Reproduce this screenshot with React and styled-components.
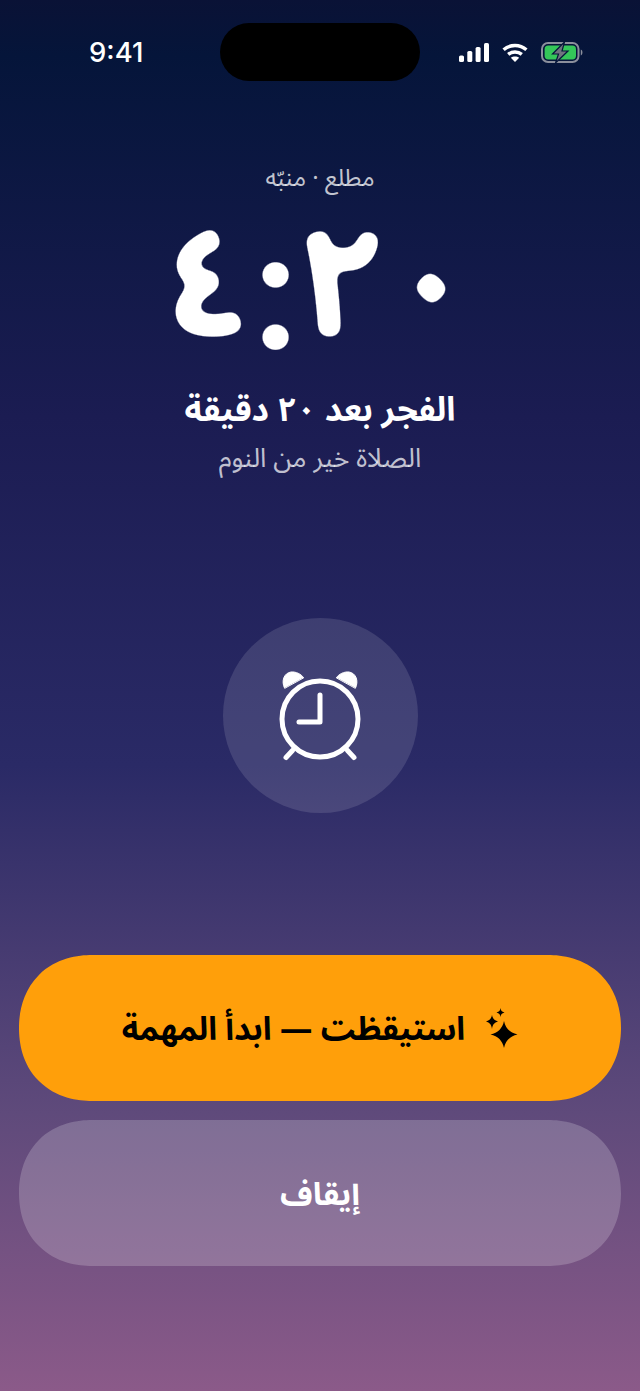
import React from 'react';
import styled, { createGlobalStyle } from 'styled-components';

const Global = createGlobalStyle`
  html, body { margin: 0; padding: 0; }
  body { font-family: "Noto Sans Arabic", "DejaVu Sans", "Noto Sans", sans-serif; }
`;
const Screen = styled.div`
  width: 640px; height: 1391px; box-sizing: border-box; overflow: hidden;
  display: flex; flex-direction: column; align-items: center;
  background: linear-gradient(180deg, #0a1236 0%, #05153a 4%, #1b1c52 30%, #2a2a66 55%, #5f4a7b 80%, #8b5a89 100%);
  color: #fff;
`;
const StatusBar = styled.div`
  width: 100%; height: 81px; box-sizing: border-box; padding-top: 23px;
  display: grid; grid-template-columns: 1fr 200px 1fr; align-items: start; direction: ltr;
`;
const Time = styled.div`
  font: 500 27.5px/58px Inter, sans-serif; padding-left: 89px; color: #fff;
`;
const Island = styled.div`
  height: 58px; border-radius: 29px; background: #000;
`;
const Indicators = styled.div`
  display: flex; align-items: center; justify-content: flex-end; gap: 13px; height: 58px; padding-right: 57px;
`;
const Eyebrow = styled.div`
  margin-top: 83px; font-size: 24px; line-height: 30px; color: rgba(255,255,255,.76);
`;
const Clock = styled.div`
  direction: ltr; font-size: 155px; line-height: 170px; font-weight: 700; margin-top: 7px; letter-spacing: 1px;
  filter: url(#round-digits);
`;
const ClockColon = styled.span`
  vertical-align: -13px; line-height: 0;
`;
const FilterDefs = styled.svg`
  position: absolute; width: 0; height: 0;
`;
const Headline = styled.div`
  font-size: 33.5px; line-height: 44px; font-weight: 700; margin-top: 18px;
`;
const Sub = styled.div`
  font-size: 26.5px; line-height: 36px; color: rgba(255,255,255,.74); margin-top: 8px;
`;
const AlarmBadge = styled.div`
  width: 195px; height: 195px; border-radius: 50%; margin-top: 141px;
  background: rgba(255,255,255,.12);
  display: flex; align-items: center; justify-content: center;
`;
const Actions = styled.div`
  width: 602px; margin-top: 142px; display: flex; flex-direction: column; gap: 19px;
`;
const Pill = styled.button`
  height: 146px; border: 0; border-radius: 73px; corner-shape: superellipse(1.12); font-family: inherit;
  font-size: ${p => p.$primary ? '32.3px' : '32px'}; font-weight: 700; padding: 0;
  display: flex; align-items: center; justify-content: center; gap: 20px;
  background: ${p => p.$primary ? '#ff9f0a' : 'rgba(255,255,255,.2)'};
  color: ${p => p.$primary ? '#000' : '#fff'};
`;
const Label = styled.span`
  margin-top: 4px;
`;

const Signal = () => (
  <svg width="30" height="19" viewBox="0 0 30 19" fill="#fff">
    <rect x="0" y="12.5" width="5" height="6.5" rx="1.6" />
    <rect x="8.3" y="8" width="5" height="11" rx="1.6" />
    <rect x="16.6" y="4" width="5" height="15" rx="1.6" />
    <rect x="25" y="0" width="5" height="19" rx="1.6" />
  </svg>
);
const Wifi = () => (
  <svg width="26" height="19" viewBox="0 0 26 19" fill="none" stroke="#fff" strokeWidth="3.4">
    <path d="M1.6 6.8 C8 1, 18 1, 24.4 6.8" />
    <path d="M6.2 11.4 C10 8.2, 16 8.2, 19.8 11.4" />
    <path d="M13 19 L8.8 14.8 C11 13, 15 13, 17.2 14.8 Z" fill="#fff" stroke="none" />
  </svg>
);
const Battery = () => (
  <svg width="42" height="21" viewBox="0 0 42 21">
    <rect x="1" y="1" width="36.5" height="19" rx="6" fill="none" stroke="#8b8f9c" strokeWidth="2" />
    <rect x="3.6" y="3.6" width="31.4" height="13.8" rx="3.6" fill="#34c759" />
    <path d="M39.8 7.6 C42 8.2 42 12.8 39.8 13.4 Z" fill="#8b8f9c" />
    <path d="M23.5 0 L11.5 12 H17.5 L14.5 21 L27 9 H21 Z" fill="#70747f" stroke="#05153a" strokeWidth="1.2" />
  </svg>
);
const AlarmIcon = () => (
  <svg width="84" height="90" viewBox="0 0 84 90" fill="none" stroke="#fff" strokeWidth="5" strokeLinecap="round" strokeLinejoin="round">
    <circle cx="42" cy="48" r="38" />
    <path d="M42 24 V51 H21" />
    <path d="M14.5 79.5 L8 86.5 M69.5 79.5 L76 86.5" />
    <path d="M6.5 17 C3 10 6 2 13 1 C18 0.5 23 3 25.5 6.5 Z" fill="#fff" strokeWidth="1" />
    <path d="M77.5 17 C81 10 78 2 71 1 C66 0.5 61 3 58.5 6.5 Z" fill="#fff" strokeWidth="1" />
  </svg>
);
const Star = ({ d }) => <path d={d} fill="#000" />;
const Sparkles = () => (
  <svg width="33" height="40" viewBox="0 0 33 40">
    <Star d="M19 13 C20.6 20.5 25 24.8 32.5 26.5 C25 28.2 20.6 32.5 19 40 C17.4 32.5 13 28.2 5.5 26.5 C13 24.8 17.4 20.5 19 13 Z" />
    <Star d="M7 7 C7.8 10.8 9.2 12.2 13 13.5 C9.2 14.8 7.8 16.2 7 21 C6.2 16.2 4.8 14.8 1 13.5 C4.8 12.2 6.2 10.8 7 7 Z" />
    <Star d="M15.5 0 C15.9 2.8 16.7 3.6 19.5 4.5 C16.7 5.4 15.9 6.2 15.5 9 C15.1 6.2 14.3 5.4 11.5 4.5 C14.3 3.6 15.1 2.8 15.5 0 Z" />
  </svg>
);

export default function App() {
  return (
    <Screen dir="rtl" lang="ar">
      <Global />
      <FilterDefs aria-hidden="true">
        <filter id="round-digits" x="-5%" y="-5%" width="110%" height="110%">
          <feGaussianBlur stdDeviation="6" />
          <feColorMatrix values="0 0 0 0 1  0 0 0 0 1  0 0 0 0 1  0 0 0 12 -4.8" />
        </filter>
      </FilterDefs>
      <StatusBar>
        <Time>9:41</Time>
        <Island />
        <Indicators><Signal /><Wifi /><Battery /></Indicators>
      </StatusBar>
      <Eyebrow>مطلع · منبّه</Eyebrow>
      <Clock>٤<ClockColon>:</ClockColon>٢٠</Clock>
      <Headline>الفجر بعد ٢٠ دقيقة</Headline>
      <Sub>الصلاة خير من النوم</Sub>
      <AlarmBadge><AlarmIcon /></AlarmBadge>
      <Actions>
        <Pill $primary><Sparkles /><Label>استيقظت — ابدأ المهمة</Label></Pill>
        <Pill><Label>إيقاف</Label></Pill>
      </Actions>
    </Screen>
  );
}
